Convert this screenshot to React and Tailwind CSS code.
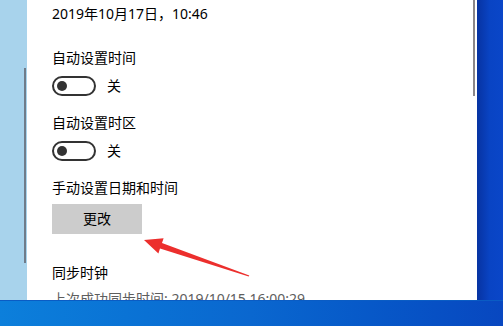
import React from "react";

const font = { fontFamily: "'Noto Sans', 'Noto Sans CJK SC', sans-serif" };

const Toggle = ({ label }) => (
  <div className="flex items-center">
    <div className="w-[44px] h-[20px] rounded-full border-2 border-[#333333] flex items-center pl-[3px]">
      <div className="w-[10px] h-[10px] rounded-full bg-[#333333]" />
    </div>
    <span className="ml-[11px] text-[14px] leading-5 text-black">{label}</span>
  </div>
);

const App = () => {
  return (
    <div className="w-[503px] h-[326px] overflow-hidden relative flex flex-col" style={font}>
      {/* window area */}
      <div className="flex h-[300px]">
        {/* background window strip on the left */}
        <div className="w-[27px] bg-[#a8d3ec] flex flex-col items-end pr-[1px]">
          <div className="mt-[68px] w-[2px] h-[195px] bg-[#6f7c8a]" />
        </div>

        {/* settings panel */}
        <div className="w-[450px] bg-white flex">
          <div className="flex-1 pl-[25px] pt-[4px] text-[14px] leading-5 text-black">
            <div>2019年10月17日，10:46</div>

            <div className="mt-[24px]">自动设置时间</div>
            <div className="mt-[8px]">
              <Toggle label="关" />
            </div>

            <div className="mt-[17px]">自动设置时区</div>
            <div className="mt-[8px]">
              <Toggle label="关" />
            </div>

            <div className="mt-[17px]">手动设置日期和时间</div>
            <button className="mt-[6px] w-[90px] h-[30px] bg-[#cccccc] text-[14px] text-black flex items-center justify-center">
              更改
            </button>

            <div className="mt-[29px]">同步时钟</div>
            <div className="mt-[6px] text-[#5e5e5e] whitespace-nowrap">上次成功同步时间: 2019/10/15 16:00:29</div>
          </div>
          {/* scrollbar */}
          <div className="w-[4px] flex">
            <div className="w-[2px] h-[96px] bg-[#8b878a]" />
          </div>
        </div>

        {/* desktop on the right */}
        <div className="flex-1 bg-gradient-to-r from-[#0733a2] via-[#0944c4] to-[#0a46c8]" />
      </div>

      {/* taskbar */}
      <div className="flex-1 bg-gradient-to-r from-[#0c7fdb] via-[#0a67cf] to-[#0847c0] border-t border-[#0a5cc4]" />

      {/* red arrow callout */}
      <svg className="absolute left-0 top-0 pointer-events-none" width="503" height="326">
        <polygon
          points="144,240 163.6,238.2 162,243 249.3,275.5 248.7,276.5 160,248.6 158.4,253.4"
          fill="#ec2f2d"
        />
      </svg>
    </div>
  );
};

export default App;
